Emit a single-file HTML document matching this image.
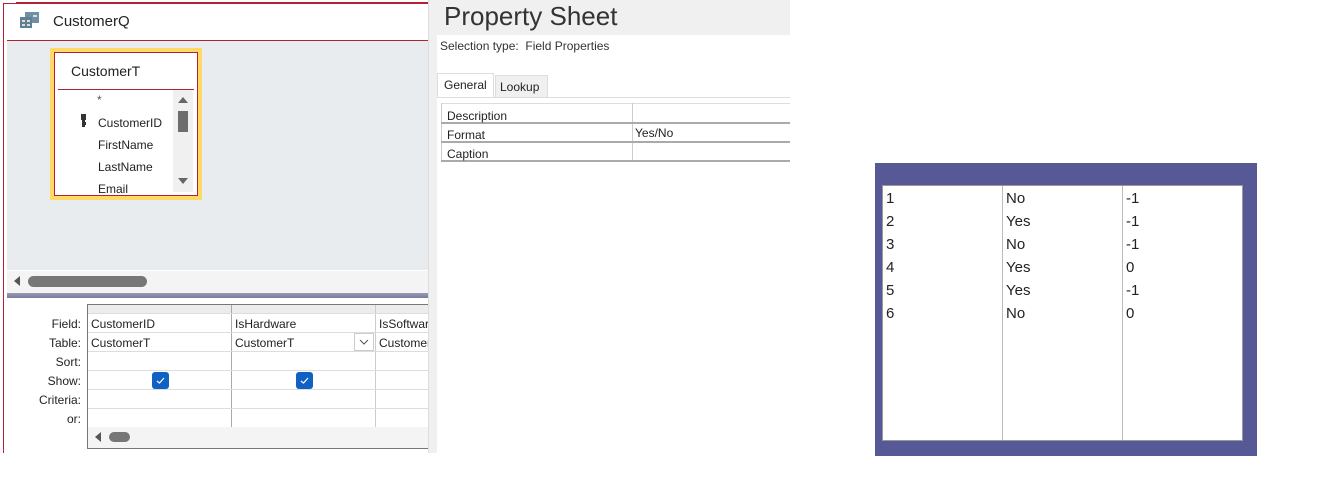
<!DOCTYPE html>
<html><head><style>
*{margin:0;padding:0;box-sizing:border-box}
body{width:1339px;height:499px;background:#fff;position:relative;font-family:"Segoe UI","Liberation Sans","DejaVu Sans",sans-serif;overflow:hidden;color:#222}
.a{position:absolute}
.t{font-size:12px;white-space:nowrap}
</style></head><body>
<!-- left panel -->
<div class="a" style="left:16px;top:0;width:412px;height:3px;border-bottom:1px solid #b22234"></div>
<div class="a" style="left:3px;top:3px;width:426px;height:450px;border-left:1px solid #b22234;border-top:1px solid #b22234"></div>
<div class="a" style="left:7px;top:40px;width:421px;height:1px;background:#b22234"></div>
<div class="a" style="left:4px;top:4px;width:2px;height:448px;background:#fff"></div>
<!-- icon -->
<svg class="a" style="left:19px;top:11px" width="22" height="20"><rect x="6" y="1" width="14" height="11" fill="#6f8fa5"/><rect x="1" y="6" width="12" height="11" fill="#5f7f95"/><rect x="3" y="9" width="3" height="2" fill="#ddd"/><rect x="8" y="9" width="3" height="2" fill="#ddd"/><rect x="3" y="13" width="3" height="2" fill="#ddd"/><rect x="8" y="13" width="3" height="2" fill="#ddd"/><rect x="14" y="4" width="4" height="2" fill="#ddd"/></svg>
<div class="a" style="left:53px;top:13px;font-size:15px">CustomerQ</div>
<div class="a" style="left:7px;top:41px;width:421px;height:229px;background:#e9ecef"></div>
<!-- table box -->
<div class="a" style="left:50px;top:48px;width:152px;height:152px;background:#ffd966"></div>
<div class="a" style="left:54px;top:52px;width:144px;height:144px;background:#fff;border:1px solid #b22234"></div>
<div class="a" style="left:71px;top:63px;font-size:14px">CustomerT</div>
<div class="a" style="left:58px;top:89px;width:136px;height:1px;background:#b22234"></div>
<div class="a" style="left:173px;top:90px;width:20px;height:102px;background:#f0f0f0"></div>
<svg class="a" style="left:175px;top:94px" width="16" height="96"><path d="M3 9 L8 3 L13 9Z" fill="#666"/><rect x="3" y="17" width="10" height="21" fill="#6d6d6d"/><path d="M3 84 L8 90 L13 84Z" fill="#666"/></svg>
<div class="a t" style="left:97px;top:93px;color:#555">*</div>
<svg class="a" style="left:80px;top:114px" width="8" height="14"><rect x="1" y="0" width="5" height="6" fill="#333"/><rect x="2" y="5" width="3" height="8" fill="#333"/><rect x="4" y="8" width="2" height="3" fill="#333"/></svg>
<div class="a t" style="left:98px;top:116px">CustomerID</div>
<div class="a t" style="left:98px;top:138px">FirstName</div>
<div class="a t" style="left:98px;top:160px">LastName</div>
<div class="a" style="left:98px;top:182px;width:60px;height:12px;overflow:hidden"><div class="t">Email</div></div>
<!-- h scrollbar -->
<div class="a" style="left:7px;top:270px;width:421px;height:23px;background:#f4f4f4;border-top:1px solid #fff"></div>
<svg class="a" style="left:13px;top:276px" width="8" height="10"><path d="M7 0 L1 5 L7 10Z" fill="#555"/></svg>
<div class="a" style="left:28px;top:276px;width:119px;height:11px;border-radius:6px;background:#777"></div>
<div class="a" style="left:7px;top:293px;width:421px;height:5px;background:linear-gradient(#9a9ab8,#7a7a9c)"></div>
<!-- grid -->
<div class="a" style="left:87px;top:304px;width:341px;height:145px;border:1px solid #777;border-right:none"></div>
<div class="a" style="left:88px;top:305px;width:340px;height:8px;background:#ececec"></div>
<div class="a" style="left:231px;top:305px;width:1px;height:122px;background:#aaa"></div>
<div class="a" style="left:375px;top:305px;width:1px;height:122px;background:#ccc"></div>
<div class="a" style="left:88px;top:313px;width:340px;height:1px;background:#ddd"></div>
<div class="a" style="left:88px;top:332px;width:340px;height:1px;background:#ddd"></div>
<div class="a" style="left:88px;top:351px;width:340px;height:1px;background:#ddd"></div>
<div class="a" style="left:88px;top:370px;width:340px;height:1px;background:#ddd"></div>
<div class="a" style="left:88px;top:389px;width:340px;height:1px;background:#ddd"></div>
<div class="a" style="left:88px;top:408px;width:340px;height:1px;background:#ddd"></div>
<div class="a t" style="left:0;top:315px;width:81px;text-align:right;line-height:19px">Field:<br>Table:<br>Sort:<br>Show:<br>Criteria:<br>or:</div>
<div class="a t" style="left:91px;top:315px;line-height:19px">CustomerID<br>CustomerT</div>
<div class="a t" style="left:235px;top:315px;line-height:19px">IsHardware<br>CustomerT</div>
<div class="a" style="left:379px;top:315px;width:49px;overflow:hidden;line-height:19px"><div class="t">IsSoftware<br>CustomerT</div></div>
<div class="a" style="left:354px;top:333px;width:20px;height:18px;border:1px solid #ccc;background:#fff"></div>
<svg class="a" style="left:359px;top:339px" width="10" height="6"><path d="M1 1 L5 5 L9 1" stroke="#555" fill="none"/></svg>
<svg class="a" style="left:152px;top:372px" width="17" height="17"><rect width="17" height="17" rx="3" fill="#0f62c4"/><path d="M5 9 L7.5 11 L12 6" stroke="#fff" fill="none" stroke-width="1.2"/></svg>
<svg class="a" style="left:296px;top:372px" width="17" height="17"><rect width="17" height="17" rx="3" fill="#0f62c4"/><path d="M5 9 L7.5 11 L12 6" stroke="#fff" fill="none" stroke-width="1.2"/></svg>
<div class="a" style="left:88px;top:427px;width:340px;height:21px;background:#f4f4f4"></div>
<svg class="a" style="left:94px;top:432px" width="8" height="10"><path d="M7 0 L1 5 L7 10Z" fill="#555"/></svg>
<div class="a" style="left:109px;top:432px;width:21px;height:10px;border-radius:5px;background:#777"></div>
<div class="a" style="left:428px;top:0;width:9px;height:453px;background:#f0f0f0;border-left:1px solid #ddd"></div>
<!-- property sheet -->
<div class="a" style="left:437px;top:0;width:353px;height:35px;background:#f0f0f0"></div>
<div class="a" style="left:444px;top:1px;font-size:26px;color:#333;font-weight:300">Property Sheet</div>
<div class="a t" style="left:440px;top:39px;color:#333">Selection type:&nbsp; Field Properties</div>
<div class="a" style="left:437px;top:73px;width:57px;height:24px;background:#fff;border:1px solid #ddd;border-bottom:none"></div>
<div class="a t" style="left:444px;top:78px">General</div>
<div class="a" style="left:495px;top:75px;width:53px;height:22px;background:#f0f0f0;border:1px solid #ddd;border-bottom:none"></div>
<div class="a t" style="left:500px;top:80px">Lookup</div>
<div class="a" style="left:437px;top:97px;width:353px;height:1px;background:#ddd"></div>
<div class="a" style="left:441px;top:103px;width:349px;height:1px;background:#ddd"></div>
<div class="a" style="left:441px;top:103px;width:1px;height:58px;background:#ccc"></div>
<div class="a" style="left:632px;top:103px;width:1px;height:58px;background:#ccc"></div>
<div class="a" style="left:441px;top:122px;width:349px;height:2px;background:#aaa"></div>
<div class="a" style="left:441px;top:141px;width:349px;height:2px;background:#aaa"></div>
<div class="a" style="left:441px;top:160px;width:349px;height:2px;background:#aaa"></div>
<div class="a t" style="left:447px;top:107px;line-height:19px">Description<br>Format<br>Caption</div>
<div class="a t" style="left:635px;top:126px">Yes/No</div>
<!-- result box -->
<div class="a" style="left:875px;top:163px;width:382px;height:293px;background:#575896"></div>
<div class="a" style="left:882px;top:185px;width:361px;height:256px;background:#fff;border:1px solid #999"></div>
<div class="a" style="left:1002px;top:186px;width:1px;height:254px;background:#bbb"></div>
<div class="a" style="left:1122px;top:186px;width:1px;height:254px;background:#bbb"></div>
<div class="a" style="left:886px;top:187px;font-size:15px;line-height:23px">1<br>2<br>3<br>4<br>5<br>6</div>
<div class="a" style="left:1006px;top:187px;font-size:15px;line-height:23px">No<br>Yes<br>No<br>Yes<br>Yes<br>No</div>
<div class="a" style="left:1126px;top:187px;font-size:15px;line-height:23px">-1<br>-1<br>-1<br>0<br>-1<br>0</div>
</body></html>
